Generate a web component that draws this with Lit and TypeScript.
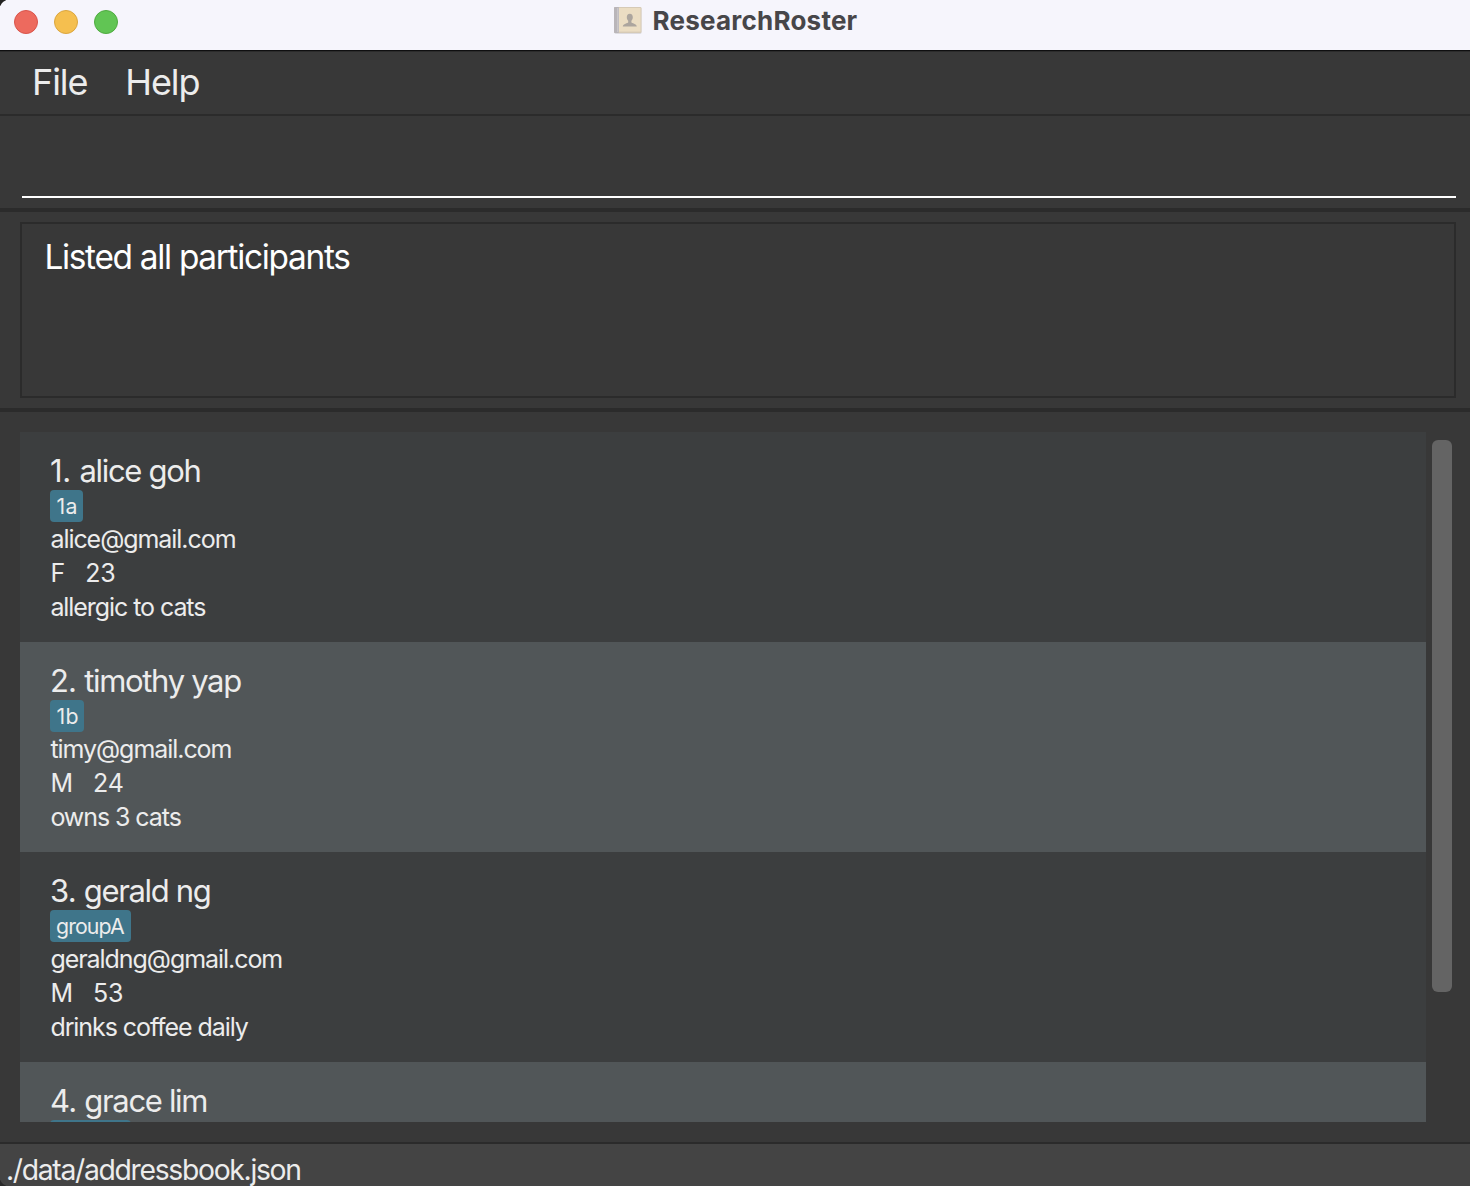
import { LitElement, html, css, svg } from "lit";
import { customElement, property } from "lit/decorators.js";
import { classMap } from "lit/directives/class-map.js";

interface Person {
  name: string;
  tag: string;
  email: string;
  gender: string;
  age: number;
  note: string;
}

const PEOPLE: Person[] = [
  { name: "alice goh", tag: "1a", email: "alice@gmail.com", gender: "F", age: 23, note: "allergic to cats" },
  { name: "timothy yap", tag: "1b", email: "timy@gmail.com", gender: "M", age: 24, note: "owns 3 cats" },
  { name: "gerald ng", tag: "groupA", email: "geraldng@gmail.com", gender: "M", age: 53, note: "drinks coffee daily" },
  { name: "grace lim", tag: "groupA", email: "", gender: "", age: 0, note: "" },
];

@customElement("person-card")
class PersonCard extends LitElement {
  @property({ attribute: false }) person!: Person;
  @property({ type: Number }) index = 1;

  static styles = css`
    :host {
      display: block;
      flex: none;
      height: 210px;
      box-sizing: border-box;
      padding: 20px 30px 18px;
      color: #ececec;
    }
    .name {
      font-size: 31px;
      line-height: 38px;
      letter-spacing: -1.32px;
      white-space: pre;
    }
    .num {
      letter-spacing: -0.8px;
    }
    .name.first .num {
      letter-spacing: -0.25px;
    }
    .tag {
      display: block;
      width: max-content;
      height: 32px;
      box-sizing: border-box;
      padding: 0 7px 0 6px;
      border-radius: 4px;
      background: #3f758a;
      font-size: 21.3px;
      line-height: 32px;
      letter-spacing: -0.9px;
    }
    .tag.short {
      padding: 0 5px 0 6.5px;
      letter-spacing: 0.3px;
    }
    .line {
      display: flex;
      gap: 20px;
      height: 34px;
      padding-left: 0.4px;
      font-size: 25px;
      line-height: 34px;
      letter-spacing: -1.05px;
      white-space: pre;
    }
    .gender {
      letter-spacing: 0;
    }
    .age {
      letter-spacing: -0.2px;
    }
    .note {
      letter-spacing: -1.07px;
    }
  `;

  render() {
    const p = this.person;
    return html`
      <div class=${classMap({ name: true, first: this.index === 1 })}><span class="num">${this.index}. </span>${p.name}</div>
      <span class=${classMap({ tag: true, short: p.tag.length < 3 })}>${p.tag}</span>
      ${p.email
        ? html`<div class="line">${p.email}</div>
            <div class="line"><span class="gender">${p.gender}</span><span class="age">${p.age}</span></div>
            <div class="line note">${p.note}</div>`
        : null}
    `;
  }
}

@customElement("app-root")
class AppRoot extends LitElement {
  static styles = css`
    :host {
      display: flex;
      flex-direction: column;
      width: 1470px;
      height: 1186px;
      overflow: hidden;
      background: #383838;
      font-family: Inter, "Liberation Sans", sans-serif;
    }
    .titlebar {
      display: grid;
      grid-template-columns: 1fr auto 1fr;
      flex: none;
      height: 52px;
      box-sizing: border-box;
      border-bottom: 1px solid #2b2b2b;
      box-shadow: inset 0 -1px #0f0f10;
      background: radial-gradient(circle at 10px 10px, #f6f5fc 10px, #222 11px) 0 0 / 6px 6px no-repeat, #f6f5fc;
    }
    .lights {
      display: flex;
      gap: 16px;
      padding: 10px 0 0 14px;
    }
    .light {
      width: 24px;
      height: 24px;
      box-sizing: border-box;
      border-radius: 50%;
    }
    .red {
      background: #ed6a5e;
      border: 1px solid #d9544b;
    }
    .yellow {
      background: #f5bf4f;
      border: 1px solid #dba63f;
    }
    .green {
      background: #61c554;
      border: 1px solid #4fab40;
    }
    .title {
      display: flex;
      gap: 10px;
      color: #474649;
      font-size: 26px;
      font-weight: 700;
      line-height: 42px;
      letter-spacing: 0.23px;
    }
    .title svg {
      width: 30px;
      height: 30px;
      margin-top: 5px;
    }
    .menu {
      display: flex;
      gap: 38px;
      flex: none;
      height: 64px;
      box-sizing: border-box;
      padding-left: 32px;
      border-bottom: 2px solid #2b2b2b;
      color: #ececec;
      font-size: 36px;
      line-height: 60px;
      letter-spacing: -1.1px;
    }
    .command {
      flex: none;
      height: 96px;
      box-sizing: border-box;
      padding: 0 14px 10px 22px;
      border-bottom: 4px solid #2b2b2b;
    }
    .field {
      height: 82px;
      box-sizing: border-box;
      border-bottom: 2px solid #fff;
    }
    .result {
      flex: none;
      height: 200px;
      box-sizing: border-box;
      padding: 10px 14px 10px 20px;
      border-bottom: 4px solid #2b2b2b;
    }
    .message {
      height: 176px;
      box-sizing: border-box;
      padding: 12px 22.4px;
      border: 2px solid #2b2b2b;
      color: #fff;
      font-size: 33.4px;
      line-height: 42px;
      letter-spacing: -1.3px;
    }
    .people {
      display: flex;
      flex: none;
      height: 730px;
      box-sizing: border-box;
      padding: 20px 18px 20px 20px;
      gap: 6px;
    }
    .list {
      display: flex;
      flex: 1;
      flex-direction: column;
      overflow: hidden;
    }
    person-card {
      background: #3c3e3f;
    }
    person-card:nth-child(even) {
      background: #515658;
    }
    .thumb {
      width: 20px;
      height: 552px;
      margin-top: 8px;
      border-radius: 6px;
      background: #646464;
    }
    .footer {
      flex: none;
      height: 44px;
      box-sizing: border-box;
      padding: 6px 6px 0;
      border-top: 2px solid #2b2b2b;
      background: radial-gradient(circle at 10px -4px, #444 10px, #2a2a2a 11px) 0 100% / 6px 6px no-repeat, #444;
      color: #ececec;
      font-size: 28.3px;
      line-height: 40px;
      letter-spacing: -1.3px;
    }
  `;

  render() {
    return html`
      <div class="titlebar">
        <div class="lights">
          <span class="light red"></span><span class="light yellow"></span><span class="light green"></span>
        </div>
        <div class="title">${this.bookIcon()}<span>ResearchRoster</span></div>
      </div>
      <div class="menu"><span>File</span><span>Help</span></div>
      <div class="command"><div class="field"></div></div>
      <div class="result"><div class="message">Listed all participants</div></div>
      <div class="people">
        <div class="list">
          ${PEOPLE.map((p, i) => html`<person-card .person=${p} .index=${i + 1}></person-card>`)}
        </div>
        <div class="thumb"></div>
      </div>
      <div class="footer">./data/addressbook.json</div>
    `;
  }

  private bookIcon() {
    return html`<svg viewBox="0 0 30 30">
      ${svg`
        <rect x="1.5" y="3" width="27" height="26" rx="1.5" fill="#dddbe0" />
        <rect x="1" y="2" width="27.5" height="26" rx="1.2" fill="#d6cab6" />
        <rect x="1" y="2" width="5" height="26" rx="1" fill="#b9b5b9" />
        <rect x="4" y="3" width="1.5" height="24" fill="#c9c6c9" />
        <rect x="6" y="3" width="21.5" height="23.6" fill="#ebddc3" />
        <path d="M16.8 8.8c-2 0-3.1 1.5-3 3.6 .1 1.7.8 2.7 1.400 3.400v1.5c-.3 1.2-5.2 1.2-5.400 4.3h14c-.2-3.1-5.1-3.1-5.400-4.300v-1.500c.6-.7 1.300-1.700 1.400-3.400 .1-2.100-1-3.600-3-3.600z" fill="#aca59e" />
      `}
    </svg>`;
  }
}
